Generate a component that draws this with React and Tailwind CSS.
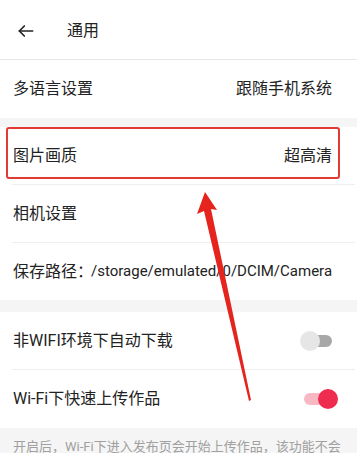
import React from 'react';

const BackIcon = ({ className }) => (
  <svg viewBox="0 0 24 24" fill="none" stroke="currentColor" strokeWidth="2" strokeLinecap="round" strokeLinejoin="round" className={className}>
    <path d="M20 12H4" />
    <path d="M10 6l-6 6 6 6" />
  </svg>
);

const Row = ({ label, value, children, divider }) => (
  <div className="relative flex h-[58px] items-center justify-between px-[13px]">
    <span className="text-[16px] text-[#222]">{label}</span>
    {value && <span className="mr-[12px] text-[16px] text-[#222]">{value}</span>}
    {children}
    {divider && <div className="absolute bottom-0 left-[12px] right-[2px] h-px bg-[#eeeeee]" />}
  </div>
);

const Toggle = ({ on }) =>
  on ? (
    <div className="relative mr-[6px] h-[20px] w-[34px]">
      <div className="absolute left-0 top-[4px] h-[12px] w-[24px] rounded-full bg-[#f7b7c3]" />
      <div className="absolute right-0 top-0 h-[20px] w-[20px] rounded-full bg-[#ef2b50]" />
    </div>
  ) : (
    <div className="relative mr-[12px] h-[20px] w-[32px]">
      <div className="absolute right-0 top-[4px] h-[12px] w-[22px] rounded-full bg-[#a8a8a8]" />
      <div className="absolute left-0 top-0 h-[20px] w-[20px] rounded-full bg-[#e6e6e6]" />
    </div>
  );

export default function App() {
  return (
    <div className="relative h-[453px] w-[364px] overflow-hidden bg-white" style={{ fontFamily: 'Roboto, "Noto Sans CJK SC", sans-serif' }}>
      <div className="w-[357px]">
        <div className="flex h-[60px] items-center border-b border-[#e6e6e6] px-[16px] pt-[2px]">
          <BackIcon className="h-[20px] w-[20px] text-[#222]" />
          <span className="ml-[31px] text-[16px] text-[#222]">通用</span>
        </div>
        <Row label="多语言设置" value="跟随手机系统" />
        <div className="h-[9px] bg-[#f5f5f5]" />
        <Row label="图片画质" value="超高清" divider />
        <Row label="相机设置" divider />
        <div className="flex h-[57px] items-center whitespace-nowrap px-[13px] text-[16px] text-[#222]">
          <span>保存路径：</span>
          <span className="-ml-[2px] text-[15px]">/storage/emulated/0/DCIM/Camera</span>
        </div>
        <div className="h-[12px] bg-[#f5f5f5]" />
        <Row label="非WIFI环境下自动下载" divider>
          <Toggle />
        </Row>
        <Row label="Wi-Fi下快速上传作品">
          <Toggle on />
        </Row>
        <div className="bg-[#f5f5f5] px-[13px] pt-[9px] pb-[10px] text-[13px] leading-[20px] text-[#a0a0a0]">
          开启后，Wi-Fi下进入发布页会开始上传作品，该功能不会损耗流量
        </div>
      </div>

      {/* annotation overlay */}
      <div className="absolute left-[6px] top-[127px] h-[52px] w-[334px] rounded-[3px] border-2 border-[#e23b33]" />
      <svg className="absolute left-0 top-0" width="364" height="453" viewBox="0 0 364 453">
        <polygon points="205,192 217,210 211,209 251,400 249,401 204,211 197,214" fill="#e5241d" />
      </svg>
    </div>
  );
}
